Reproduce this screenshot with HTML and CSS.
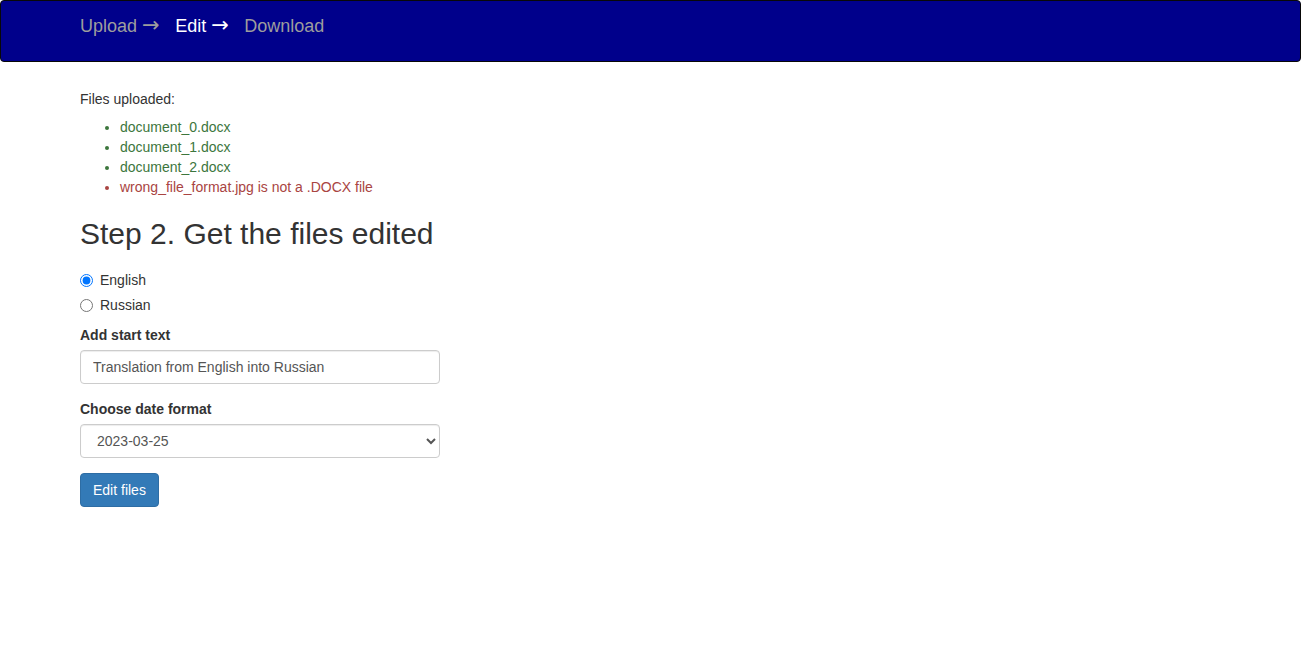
FILE: index.html
```
<!DOCTYPE html>
<html lang="en">
<head>
    <meta charset="UTF-8">
    <meta name="viewport" content="width=device-width, initial-scale=1.0">
    <title>Edit files</title>
    <link rel="stylesheet" href="styles.css">
</head>
<body>
    <nav class="navbar">
        <div class="container">
            <ul class="steps">
                <li>Upload <span class="arrow">&rarr;</span></li>
                <li class="active">Edit <span class="arrow">&rarr;</span></li>
                <li>Download</li>
            </ul>
        </div>
    </nav>

    <div class="container">
        <p class="files-title">Files uploaded:</p>
        <ul class="file-list">
            <li class="text-success">document_0.docx</li>
            <li class="text-success">document_1.docx</li>
            <li class="text-success">document_2.docx</li>
            <li class="text-danger">wrong_file_format.jpg is not a .DOCX file</li>
        </ul>

        <h2>Step 2. Get the files edited</h2>

        <form class="edit-form">
            <div class="radio">
                <label><input type="radio" name="lang" value="en" checked> English</label>
            </div>
            <div class="radio">
                <label><input type="radio" name="lang" value="ru"> Russian</label>
            </div>

            <div class="form-group">
                <label class="control-label" for="startText">Add start text</label>
                <input type="text" id="startText" class="form-control" value="Translation from English into Russian">
            </div>

            <div class="form-group">
                <label class="control-label" for="dateFormat">Choose date format</label>
                <select id="dateFormat" class="form-control">
                    <option>2023-03-25</option>
                    <option>25.03.2023</option>
                    <option>03/25/2023</option>
                </select>
            </div>

            <button type="button" class="btn">Edit files</button>
        </form>
    </div>
</body>
</html>
```

FILE: styles.css
```
* {
    box-sizing: border-box;
}

body {
    margin: 0;
    font-family: "Liberation Sans", Arial, sans-serif;
    font-size: 14px;
    line-height: 20px;
    color: #333;
    background: #fff;
}

.container {
    width: 1171px;
    margin: 0 auto;
    padding: 0 15px;
}

/* top bar */
.navbar {
    height: 62px;
    background: #00008b;
    border: 1px solid #080808;
    border-radius: 4px;
    margin-bottom: 27px;
}

.steps {
    display: flex;
    gap: 15px;
    margin: 0;
    padding: 15px 0 0;
    list-style: none;
}

.steps li {
    font-size: 18px;
    line-height: 20px;
    color: #9d9d9d;
}

.steps li.active {
    color: #fff;
}

.arrow {
    font-family: "DejaVu Sans", sans-serif;
    font-size: 21px;
    line-height: 0;
    margin-right: 0.5px;
}

/* uploaded files */
.files-title {
    margin: 0 0 8px;
}

.file-list {
    margin: 0 0 10px;
    padding-left: 40px;
}

.text-success {
    color: #3c763d;
}

.text-danger {
    color: #a94442;
}

h2 {
    font-size: 30px;
    font-weight: 500;
    line-height: 33px;
    margin: 20px 0 20px;
}

/* form */
.edit-form {
    width: 360px;
}

.radio {
    margin: 10px 0;
}

.radio + .radio {
    margin-top: -5px;
}

.radio label {
    display: flex;
    align-items: center;
    gap: 7px;
    min-height: 20px;
    cursor: pointer;
}

.radio input {
    width: 13px;
    height: 13px;
    margin: 0;
}

.form-group {
    margin-bottom: 15px;
}

.control-label {
    display: block;
    margin-bottom: 5px;
    font-weight: bold;
}

.form-control {
    display: block;
    width: 100%;
    height: 34px;
    padding: 6px 12px;
    font-family: inherit;
    font-size: 14px;
    line-height: 20px;
    color: #555;
    background: #fff;
    border: 1px solid #ccc;
    border-radius: 4px;
    box-shadow: inset 0 1px 1px rgba(0, 0, 0, 0.075);
}

.btn {
    display: inline-block;
    height: 34px;
    padding: 6px 12px;
    font-family: inherit;
    font-size: 14px;
    line-height: 20px;
    color: #fff;
    background: #337ab7;
    border: 1px solid #2e6da4;
    border-radius: 4px;
    cursor: pointer;
}

.btn:hover {
    background: #286090;
}
```
